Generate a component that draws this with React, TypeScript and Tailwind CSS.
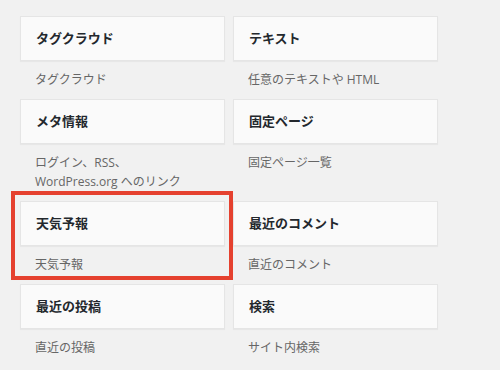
import React from "react";

type Item = { title: string; desc: React.ReactNode; highlight?: boolean };

const left: Item[] = [
  { title: "タグクラウド", desc: "タグクラウド" },
  { title: "メタ情報", desc: (<>ログイン、RSS、<br />WordPress.org へのリンク</>) },
  { title: "天気予報", desc: "天気予報", highlight: true },
  { title: "最近の投稿", desc: "直近の投稿" },
];
const right: Item[] = [
  { title: "テキスト", desc: "任意のテキストや HTML" },
  { title: "固定ページ", desc: "固定ページ一覧" },
  { title: "最近のコメント", desc: "直近のコメント" },
  { title: "検索", desc: "サイト内検索" },
];

function Widget({ item }: { item: Item }) {
  return (
    <div className="relative flex flex-col">
      <div className="h-[45px] flex items-center px-[15px] bg-[#fafafa] border border-[#e5e5e5] shadow-[0_1px_1px_rgba(0,0,0,0.04)]">
        <span className="text-[13px] font-bold text-[#23282d] leading-none">{item.title}</span>
      </div>
      <div className="pl-[15px] pt-[9px] pb-[10px] text-[12px] leading-[19px] text-[#666]">{item.desc}</div>
      {item.highlight && (
        <div className="absolute left-[-9px] right-[-8px] top-[-10px] bottom-[4px] border-4 border-[#e5412f] pointer-events-none" />
      )}
    </div>
  );
}

export default function App() {
  const rows = left.map((l, i) => [l, right[i]]);
  return (
    <div
      className="w-[500px] h-[370px] overflow-hidden bg-[#f1f1f1] pl-[20px] pt-[16px]"
      style={{ fontFamily: '"Open Sans", "Noto Sans CJK JP", sans-serif' }}
    >
      <div className="grid grid-cols-[205px_205px] gap-x-[8px]">
        {rows.map(([l, r], i) => (
          <React.Fragment key={i}>
            <Widget item={l} />
            <Widget item={r} />
          </React.Fragment>
        ))}
      </div>
    </div>
  );
}
